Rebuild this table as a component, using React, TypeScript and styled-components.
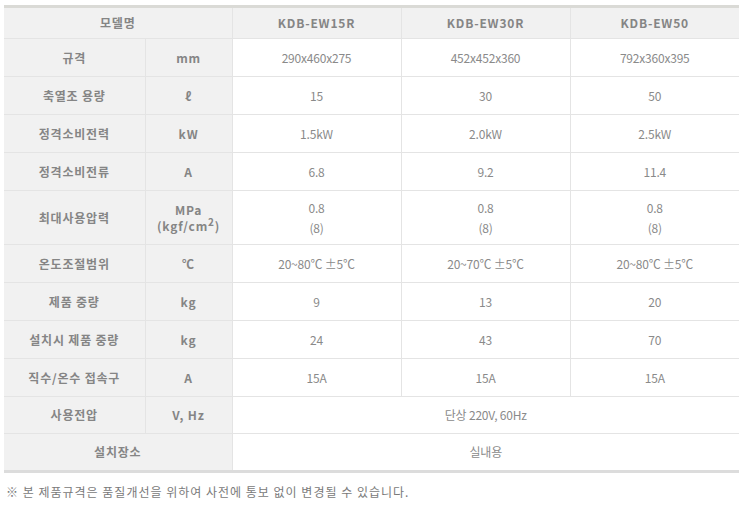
import React from "react";
import styled, { createGlobalStyle } from "styled-components";

const Global = createGlobalStyle`
  html, body { margin: 0; padding: 0; background: #fff; }
  body { font-family: "Noto Sans CJK KR", "Noto Sans", sans-serif; }
`;

const Page = styled.div`
  padding: 5px 4px 0 4px;
  width: 735px;
`;

const Table = styled.table`
  width: 735px;
  border-collapse: collapse;
  table-layout: fixed;
  border-top: 3px solid #dadad6;
  border-bottom: 3px solid #dcdcdc;
  font-size: 12px;
`;

const Row = styled.tr<{ $h: number }>`
  height: ${(p) => p.$h}px;
`;

const Th = styled.th`
  background: #f1f1f1;
  color: #858585;
  font-weight: 700;
  text-align: center;
  vertical-align: middle;
  border: 1px solid #e4e4e4;
  border-left: none;
  padding: 0;
  line-height: 16px;
  letter-spacing: 0.8px;
`;

const Td = styled.td<{ $head?: boolean }>`
  background: ${(p) => (p.$head ? "#f1f1f1" : "#fff")};
  color: ${(p) => (p.$head ? "#858585" : "#8a8a8a")};
  font-weight: ${(p) => (p.$head ? 700 : 400)};
  text-align: center;
  vertical-align: middle;
  border: 1px solid #e4e4e4;
  border-right: none;
  padding: 0;
  line-height: 20px;
  letter-spacing: ${(p) => (p.$head ? "0.8px" : "-0.2px")};
`;

const Note = styled.p`
  margin: 10px 0 0 2px;
  font-size: 12px;
  color: #7a7a7a;
  letter-spacing: 1px;
`;

type Spec = { label: string; unit: React.ReactNode; vals: React.ReactNode[]; h?: number };

const specs: Spec[] = [
  { label: "규격", unit: "mm", vals: ["290x460x275", "452x452x360", "792x360x395"] },
  { label: "축열조 용량", unit: "ℓ", vals: ["15", "30", "50"] },
  { label: "정격소비전력", unit: "kW", vals: ["1.5kW", "2.0kW", "2.5kW"] },
  { label: "정격소비전류", unit: "A", vals: ["6.8", "9.2", "11.4"] },
  {
    label: "최대사용압력",
    unit: (
      <>
        MPa
        <br />
        (kgf/cm<sup style={{ fontSize: "10px", lineHeight: 0 }}>2</sup>)
      </>
    ),
    vals: [0, 1, 2].map((i) => (
      <React.Fragment key={i}>
        0.8
        <br />
        (8)
      </React.Fragment>
    )),
    h: 54,
  },
  { label: "온도조절범위", unit: "℃", vals: ["20~80℃ ±5℃", "20~70℃ ±5℃", "20~80℃ ±5℃"] },
  { label: "제품 중량", unit: "kg", vals: ["9", "13", "20"] },
  { label: "설치시 제품 중량", unit: "kg", vals: ["24", "43", "70"] },
  { label: "직수/온수 접속구", unit: "A", vals: ["15A", "15A", "15A"] },
];

export default function App() {
  return (
    <Page>
      <Global />
      <Table>
        <colgroup>
          <col style={{ width: 141 }} />
          <col style={{ width: 87 }} />
          <col style={{ width: 169 }} />
          <col style={{ width: 169 }} />
          <col style={{ width: 169 }} />
        </colgroup>
        <tbody>
          <Row $h={32}>
            <Th colSpan={2}>모델명</Th>
            <Td $head>KDB-EW15R</Td>
            <Td $head>KDB-EW30R</Td>
            <Td $head>KDB-EW50</Td>
          </Row>
          {specs.map((s) => (
            <Row $h={s.h ?? 38} key={s.label}>
              <Th>{s.label}</Th>
              <Th>{s.unit}</Th>
              {s.vals.map((v, i) => (
                <Td key={i}>{v}</Td>
              ))}
            </Row>
          ))}
          <Row $h={37}>
            <Th>사용전압</Th>
            <Th>V, Hz</Th>
            <Td colSpan={3}>단상 220V, 60Hz</Td>
          </Row>
          <Row $h={38}>
            <Th colSpan={2}>설치장소</Th>
            <Td colSpan={3}>실내용</Td>
          </Row>
        </tbody>
      </Table>
      <Note>※ 본 제품규격은 품질개선을 위하여 사전에 통보 없이 변경될 수 있습니다.</Note>
    </Page>
  );
}
